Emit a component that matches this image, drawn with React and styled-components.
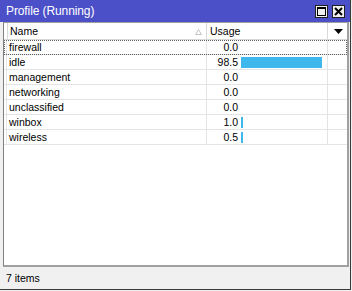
import React from "react";
import styled, { createGlobalStyle } from "styled-components";

const Global = createGlobalStyle`
  html, body { margin: 0; padding: 0; background: #f0f0f0; }
  #root { width: 352px; height: 291px; }
  * { box-sizing: border-box; }
`;

const Win = styled.div`
  width: 351px;
  height: 290px;
  display: flex;
  flex-direction: column;
  background: #f0f0f0;
  border-right: 1px solid #3a3a3a;
  border-bottom: 1px solid #3a3a3a;
  font-family: "Liberation Sans", Arial, sans-serif;
`;

const TitleBar = styled.div`
  height: 22px;
  flex: none;
  background: #4b50c9;
  display: flex;
  align-items: center;
  padding: 0 5px 0 6px;
`;

const Title = styled.div`
  flex: 1;
  color: #fff;
  font-family: "Liberation Sans", Arial, sans-serif;
  font-size: 12px;
  letter-spacing: -0.1px;
`;

const TBtn = styled.div`
  width: 13px;
  height: 13px;
  margin-left: ${(p) => p.$gap || 0}px;
  background: #f0f0f0;
  border: 1px solid #202020;
  display: flex;
  align-items: center;
  justify-content: center;
`;

const Body = styled.div`
  flex: 1;
  display: flex;
  flex-direction: column;
  padding: 0 1px 0 3px;
  min-height: 0;
`;

const List = styled.div`
  flex: 1;
  background: #fff;
  border-left: 1px solid #808080;
  border-right: 2px solid #a0a0a0;
  border-bottom: 2px solid #a0a0a0;
  border-top: 1px solid #a0a0a0;
  display: flex;
  flex-direction: column;
`;

const cols = "3px 200px 121px 1fr";

const HeaderRow = styled.div`
  display: grid;
  grid-template-columns: ${cols};
  height: 17px;
  border-bottom: 1px solid #d8d8d8;
  font-size: 10.5px;
  color: #000;
`;

const HCell = styled.div`
  position: relative;
  display: flex;
  align-items: center;
  padding-left: ${(p) => p.$pl || 3}px;
  border-right: ${(p) => (p.$last ? "none" : "1px solid #d8d8d8")};
`;

const SortMark = styled.svg`
  position: absolute;
  right: 4px;
  top: 6px;
`;

const Row = styled.div`
  display: grid;
  grid-template-columns: ${cols};
  height: 15px;
  border-bottom: 1px solid #e4e4e4;
  font-size: 10.5px;
  color: #000;
  position: relative;
  outline: ${(p) => (p.$focus ? "1px dotted #606060" : "none")};
  outline-offset: -1px;
`;

const Cell = styled.div`
  display: flex;
  align-items: center;
  padding-left: ${(p) => p.$pl || 0}px;
  border-right: ${(p) => (p.$last ? "none" : "1px solid #e4e4e4")};
  white-space: nowrap;
  overflow: hidden;
`;

const Num = styled.span`
  width: 31px;
  text-align: right;
  flex: none;
`;

const Bar = styled.div`
  height: 11px;
  margin-left: 3px;
  background: #3db7ec;
  flex: none;
`;

const Status = styled.div`
  height: 22px;
  flex: none;
  display: flex;
  align-items: center;
  padding-left: 3px;
  font-size: 10.5px;
  color: #000;
`;

const rows = [
  ["firewall", 0.0],
  ["idle", 98.5],
  ["management", 0.0],
  ["networking", 0.0],
  ["unclassified", 0.0],
  ["winbox", 1.0],
  ["wireless", 0.5],
];

export default function App() {
  return (
    <>
      <Global />
      <Win>
        <TitleBar>
          <Title>Profile (Running)</Title>
          <TBtn>
            <svg width="9" height="9" viewBox="0 0 9 9">
              <rect x="0.5" y="0.5" width="8" height="8" fill="none" stroke="#000" />
              <rect x="0" y="0" width="9" height="2" fill="#000" />
            </svg>
          </TBtn>
          <TBtn $gap={4}>
            <svg width="9" height="9" viewBox="0 0 9 9">
              <path d="M1 1L8 8M8 1L1 8" stroke="#000" strokeWidth="2" />
            </svg>
          </TBtn>
        </TitleBar>
        <Body>
          <List>
            <HeaderRow>
              <HCell $pl={0} />
              <HCell>
                Name
                <SortMark width="7" height="6" viewBox="0 0 7 6">
                  <path d="M3.5 0.5L6.5 5.5H0.5Z" fill="none" stroke="#c4c4c4" />
                </SortMark>
              </HCell>
              <HCell>Usage</HCell>
              <HCell $last $pl={6}>
                <svg width="9" height="5" viewBox="0 0 9 5">
                  <path d="M0 0H9L4.5 5Z" fill="#000" />
                </svg>
              </HCell>
            </HeaderRow>
            {rows.map(([name, v], i) => (
              <Row key={name} $focus={i === 0}>
                <Cell />
                <Cell $pl={2}>{name}</Cell>
                <Cell>
                  <Num>{v.toFixed(1)}</Num>
                  {v > 0 && (
                    <Bar style={{ width: Math.max(2, Math.round(v * 0.82)) }} />
                  )}
                </Cell>
                <Cell $last />
              </Row>
            ))}
          </List>
          <Status>7 items</Status>
        </Body>
      </Win>
    </>
  );
}
